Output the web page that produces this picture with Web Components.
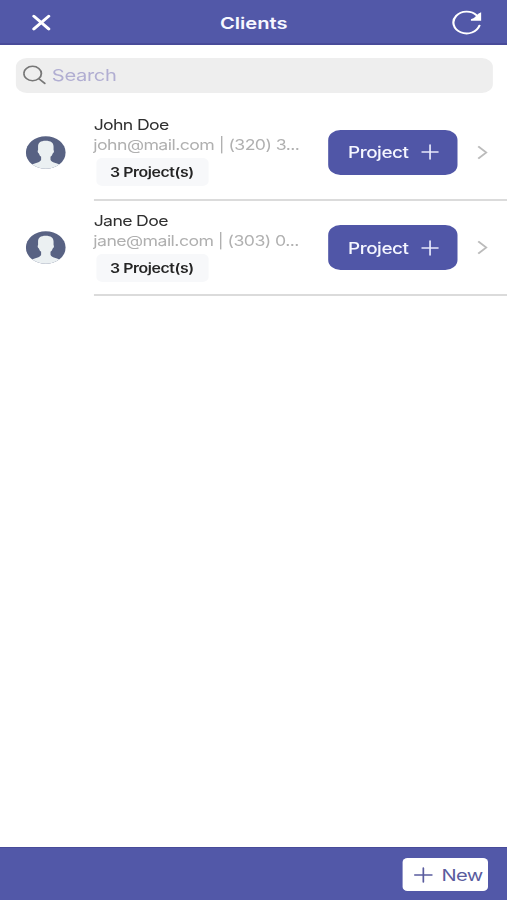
<!DOCTYPE html>
<html lang="en">
<head>
<meta charset="utf-8">
<title>Clients</title>
<style>
  body {
    margin: 0;
    overflow: hidden;
    background-color: #FFF;
    font-family: Inter, "Liberation Sans", sans-serif;
  }
</style>
</head>
<body>
<clients-app>
  <app-header slot="header">Clients</app-header>
  <search-bar placeholder="Search"></search-bar>
  <client-row>
    <span slot="name">John Doe</span>
    <span slot="contact">john@mail.com | (320) 3...</span>
    <span slot="count">3 Project(s)</span>
  </client-row>
  <client-row>
    <span slot="name">Jane Doe</span>
    <span slot="contact">jane@mail.com | (303) 0...</span>
    <span slot="count">3 Project(s)</span>
  </client-row>
  <app-footer slot="footer">New</app-footer>
</clients-app>

<script>
function define(name, html) {
  const template = document.createElement("template");
  template.innerHTML = html;
  customElements.define(name, class extends HTMLElement {
    constructor() {
      super();
      this.attachShadow({ mode: "open" }).append(template.content.cloneNode(true));
    }

    connectedCallback() {
      const input = this.shadowRoot.querySelector("[data-placeholder]");
      if (input) input.textContent = this.getAttribute("placeholder");
    }
  });
}

// everything is laid out on a narrower screen and widened to fit
define("clients-app", `
  <style>
    :host {
      display: flex;
      flex-direction: column;
      width: calc(100vw / 1.22);
      height: 900px;
      transform: scaleX(1.22);
      transform-origin: 0 0;
    }
    main { flex: 1; }
  </style>
  <slot name="header"></slot>
  <main><slot></slot></main>
  <slot name="footer"></slot>
`);

define("app-header", `
  <style>
    :host {
      display: grid;
      grid-template-columns: 1fr auto 1fr;
      align-items: center;
      box-sizing: border-box;
      height: 45px;
      padding: 2px 21px 0 26px;
      background-color: #5258A8;
      border-bottom: 2px solid #484B99;
      color: #F6F7FF;
      font-size: 16.5px;
      font-weight: 600;
    }
    svg { display: block; }
    .refresh { justify-self: end; }
    .title { padding: 1px 4.5px 0 0; }
  </style>
  <svg width="16" height="17" viewBox="0 0 16 17" fill="none" stroke="#FFF" stroke-width="2.6" stroke-linecap="round">
    <path d="M1.7 2.1 14 15M14 2.1 1.7 15"/>
  </svg>
  <div class="title"><slot></slot></div>
  <svg class="refresh" width="25" height="25" viewBox="0 0 25 25">
    <path d="M23 15.6A10.9 10.9 0 1 1 20.7 5.3" fill="none" stroke="#FFF" stroke-width="1.8" stroke-linecap="round"/>
    <path d="M24.4 2.3v8.4h-8.4v-1.5l2.5-1.3 3.8-4.3z" fill="#FFF"/>
  </svg>
`);

define("search-bar", `
  <style>
    :host {
      display: flex;
      align-items: center;
      box-sizing: border-box;
      height: 35px;
      margin: 13px 12px 12.6px 13px;
      padding-left: 6px;
      gap: 4.5px;
      border-radius: 9px;
      background-color: #EEE;
      color: #B1AED2;
      font-size: 16.5px;
      letter-spacing: -0.3px;
    }
    svg { margin-top: -1px; }
    span { margin-top: -1px; }
  </style>
  <svg width="19" height="20" viewBox="0 0 19 20" fill="none" stroke="#777" stroke-width="1.5" stroke-linecap="round">
    <circle cx="7.700" cy="8.5" r="7.2"/>
    <path d="M12.900 13.700 17.700 18.400"/>
  </svg>
  <span data-placeholder></span>
`);

define("user-avatar", `
  <style>
    :host { display: block; width: 33px; height: 33px; }
    svg { display: block; }
    .back { fill: #586283; }
    .person { fill: #EBF0F2; }
  </style>
  <svg width="33" height="33" viewBox="0 0 33 33">
    <clipPath id="round"><circle cx="16.5" cy="16.5" r="16.3"/></clipPath>
    <g clip-path="url(#round)">
      <path class="back" d="M0 0h33v33H0z"/>
      <path class="person" d="M16.4 4.800c4.300 0 6.500 2.100 6.500 5.700v3.700c.6.3.4 2.500-.7 3.200-.3 1.400-.9 2.500-1.800 3.400v3c.3 1.500 1.700 2.300 3.400 3 1.800.7 3.300 1.300 4.300 2.300V34H5v-4.900c1-1 2.500-1.600 4.300-2.300 1.700-.7 3.100-1.500 3.400-3v-3c-.9-.9-1.500-2-1.800-3.400-1.100-.7-1.300-2.900-.7-3.200v-3.700c0-3.600 2-5.700 6.200-5.700z"/>
    </g>
  </svg>
`);

define("project-button", `
  <style>
    :host {
      display: flex;
      align-items: center;
      justify-content: space-between;
      box-sizing: border-box;
      width: 106px;
      height: 45px;
      padding: 0 15.5px 0 16px;
      border-radius: 10px;
      background-color: #5056A7;
      color: #F5F6FF;
      font-size: 15.5px;
      font-weight: 500;
      letter-spacing: -0.4px;
    }
    span { margin-top: 1px; }
  </style>
  <span><slot></slot></span>
  <svg width="15" height="16" viewBox="0 0 15 16" stroke="#E6E8FC" stroke-width="1.4" stroke-linecap="round">
    <path d="M7.5 1v14M1 8h13"/>
  </svg>
`);

define("client-row", `
  <style>
    :host {
      display: grid;
      grid-template-columns: 56px 1fr;
      box-sizing: border-box;
      height: 95.4px;
      padding-left: 20.5px;
    }
    user-avatar { margin: 30px 0 0; }
    .content {
      display: flex;
      align-items: center;
      box-sizing: border-box;
      padding-top: 0.4px;
      border-bottom: 2px solid #DBDBDB;
    }
    .info {
      flex: none;
      width: 192.8px;
      margin-top: -3.4px;
      white-space: nowrap;
    }
    .name, .contact {
      font-size: 14.5px;
      line-height: 20px;
    }
    .name {
      color: #303030;
      letter-spacing: -0.55px;
      padding-left: 0.3px;
    }
    .contact {
      color: #B0B0B0;
      letter-spacing: -0.46px;
    }
    .count {
      box-sizing: border-box;
      width: 92px;
      margin: 3px 0 0 2px;
      border-radius: 5px;
      background-color: #F7F8FA;
      color: #252525;
      font-size: 13px;
      font-weight: 600;
      letter-spacing: -0.33px;
      line-height: 28px;
      text-align: center;
    }
    .chevron { margin-left: 16px; }
  </style>
  <user-avatar></user-avatar>
  <div class="content">
    <div class="info">
      <div class="name"><slot name="name"></slot></div>
      <div class="contact"><slot name="contact"></slot></div>
      <div class="count"><slot name="count"></slot></div>
    </div>
    <project-button>Project</project-button>
    <svg class="chevron" width="9" height="15" viewBox="0 0 9 15" fill="none" stroke="#BBB" stroke-width="1.7">
      <path d="M1 1.4 7.5 7.5 1 13.6"/>
    </svg>
  </div>
`);

define("app-footer", `
  <style>
    :host {
      display: flex;
      justify-content: flex-end;
      align-items: center;
      box-sizing: border-box;
      height: 53px;
      padding: 1px 15.5px 0 0;
      border-top: 1px solid #484B99;
      background-color: #5258A8;
    }
    .new {
      display: flex;
      align-items: center;
      justify-content: space-between;
      box-sizing: border-box;
      width: 70px;
      height: 33px;
      padding: 0 4.5px 0 9px;
      border-radius: 4px;
      background-color: #FFF;
      color: #5A5C9E;
      font-size: 16.5px;
      letter-spacing: -0.5px;
    }
  </style>
  <div class="new">
    <svg width="16" height="16" viewBox="0 0 16 16" stroke="#5A5C9E" stroke-width="1.4" stroke-linecap="round">
      <path d="M8 1v14M1 8h14"/>
    </svg>
    <span><slot></slot></span>
  </div>
`);
</script>
</body>
</html>
